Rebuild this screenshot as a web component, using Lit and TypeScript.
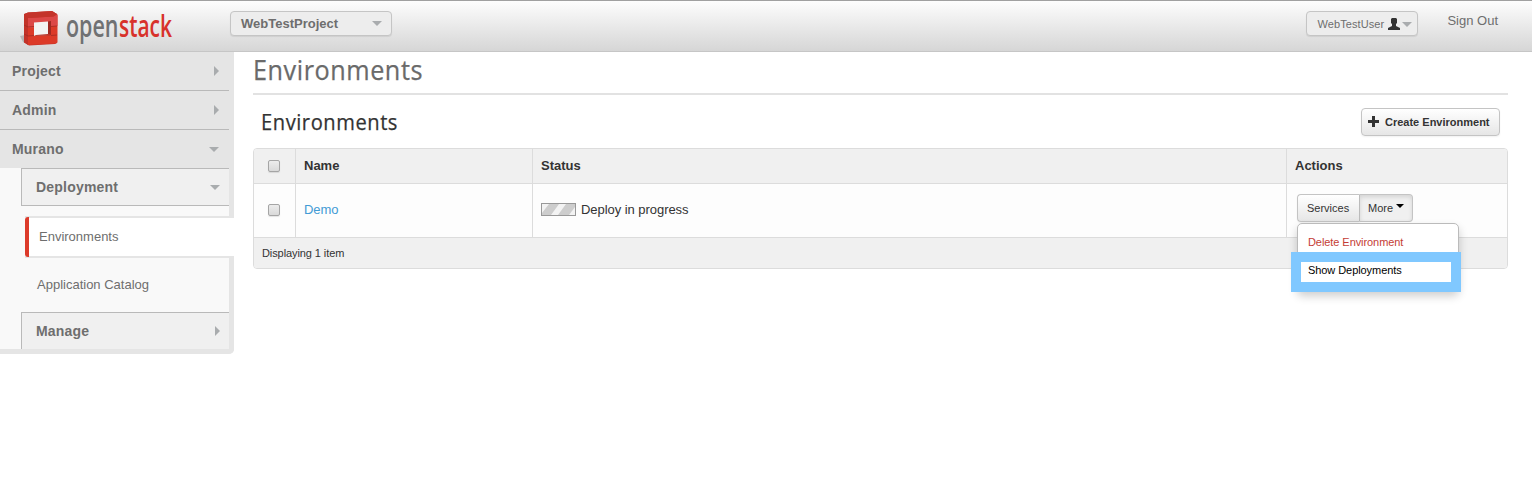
import { LitElement, html, svg, css } from "lit";
import { customElement } from "lit/decorators.js";

@customElement("os-logo")
class OsLogo extends LitElement {
  static styles = css`
    :host { display: block; width: 160px; height: 44px; }
    svg { display: block; overflow: visible; }
    .word { font-family: "Open Sans", sans-serif; font-size: 30px; font-weight: 600; }
    .open { fill: #707173; }
    .stack { fill: #d8322b; }
  `;
  render() {
    return html`<svg width="160" height="44" viewBox="20 5 160 44">
      <path d="M20 36l5-1v8l-2-1z" fill="#8b8b8b" opacity=".5" />
      <path d="M24 14l4-1.500 24-1.500 5 3v29l-2 1-26 1.500-5-3z" fill="#c5332a" />
      <path d="M28 18.500l26-1.500 3.500-2v27.500l-2.500 1-27 1.500z" fill="#dc3a28" />
      <path d="M28 18l25.500-1.500 4-2.500v12l-6 .5-23.500 1.500z" fill="#dc4847" />
      <path d="M24.500 14l3.500-1.500 24-1.500 5 3-3.500 2.500-25 1.500z" fill="#c4342b" />
      <path d="M24 14l4 4v27l-4-3z" fill="#c23329" />
      <path d="M34 22.500l14-1v13.500l-14 1z" fill="#f3f3f3" />
      <path d="M48 21.500l3-.5v14l-3-1z" fill="#9f2a23" />
      <path d="M34 36l2-1 12-1 3 1.500z" fill="#b5352b" />
      <path d="M24 25l4 2 6-.5M24 34l4 2 6-.5M51 26.500l6-.5M51 35.500l6-.5" fill="none" stroke="#a82c23" stroke-width=".9" />
      <text class="word open" x="66" y="36.500" textLength="52.500" lengthAdjust="spacingAndGlyphs">open</text>
      <text class="word stack" x="119" y="36.500" textLength="53" lengthAdjust="spacingAndGlyphs">stack</text>
    </svg>`;
  }
}

@customElement("app-root")
class AppRoot extends LitElement {
  static styles = css`
    :host { display: block; height: 484px; overflow: hidden; background: #fff; color: #333; font: 13px/18px "Liberation Sans", Arial, sans-serif; }
    * { box-sizing: border-box; }
    header { height: 52px; display: flex; align-items: flex-start; border-top: 1px solid #a0a0a0; border-bottom: 1px solid #c6c6c6; background: linear-gradient(#fdfdfd, #d6d6d6); color: #6e6e6e; padding-right: 34px; }
    os-logo { margin: 4px 50px 0 20px; }
    .pick { margin-top: 10px; height: 25px; border: 1px solid #c5c5c5; border-radius: 4px; background: #ededed; display: flex; align-items: center; justify-content: space-between; box-shadow: 0 1px 1px rgba(0,0,0,.08); }
    .project { width: 162px; padding: 0 9px 0 10px; font-weight: bold; }
    .user { width: 112px; margin-left: auto; padding: 1px 5px 0 10px; font-size: 11px; letter-spacing: .1px; }
    .user svg { margin-left: auto; margin-right: 2px; }
    .signout { margin: 11px 0 0 29px; }
    .down { border: 5px solid transparent; border-top-color: #a9acae; border-bottom: 0; }
    .right { border: 5px solid transparent; border-left-color: #a9acae; border-right: 0; }
    .body { display: flex; align-items: flex-start; }
    nav { width: 234px; height: 302px; background: #f9f9f9; border-right: 5px solid #e5e5e5; border-bottom: 5px solid #e5e5e5; border-radius: 0 0 5px 0; color: #6e6e6e; }
    .top, .sub { display: flex; align-items: center; justify-content: space-between; font-weight: bold; font-size: 14px; letter-spacing: .2px; }
    .top { height: 39px; padding: 0 10px 0 12px; background: #e5e5e5; border-bottom: 1px solid #b9b9b9; }
    .top.last { height: 38px; border: 0; }
    .sub { margin-left: 21px; height: 38px; padding: 0 9px 0 14px; background: #f0f0f0; border: 1px solid #b9b9b9; border-right: 0; }
    .active { margin: 10px -5px 0 25px; height: 42px; background: #fff; border-top: 2px solid #e5e5e5; border-bottom: 2px solid #e5e5e5; display: flex; }
    .bar { width: 4px; height: 40px; margin-top: -1px; background: #dc3b2b; border-radius: 3px 0 0 3px; }
    .active span { padding: 10px 0 0 10px; }
    .plain { height: 54px; padding: 18px 0 0 37px; }
    .manage { border-bottom: 0; height: 37px; }
    main { width: 1255px; margin-left: 19px; }
    .title { height: 43px; border-bottom: 2px solid #e2e2e2; }
    .title svg, .caption svg { display: block; overflow: visible; }
    .h { font-family: "Open Sans", sans-serif; }
    .caption { height: 53px; display: flex; justify-content: space-between; padding: 13px 8px 0 8px; }
    h1, h2 { margin: 0; font-weight: normal; }
    .btn { height: 28px; border: 1px solid #c4c4c4; border-radius: 4px; background: linear-gradient(#fff, #e6e6e6); box-shadow: 0 1px 2px rgba(0,0,0,.06); font-size: 11px; display: flex; align-items: center; }
    .create { width: 139px; padding-left: 6px; gap: 6px; font-weight: bold; white-space: nowrap; }
    .create svg { margin-top: -2px; }
    .table { border: 1px solid #dcdcdc; border-radius: 4px; height: 121px; background: #fdfdfd; }
    .row { display: grid; grid-template-columns: 41px 237px 754px 1fr; }
    .row > div { border-left: 1px solid #dcdcdc; padding-left: 8px; display: flex; align-items: center; }
    .row > div:first-child { border-left: 0; padding-left: 14px; }
    .head { height: 34px; background: #f0f0f0; font-weight: bold; border-radius: 3px 3px 0 0; }
    .data { height: 55px; border-top: 1px solid #dcdcdc; border-bottom: 1px solid #dcdcdc; letter-spacing: -.05px; }
    .row.data > div:not(.actions) { padding-bottom: 2px; }
    .foot { height: 30px; background: #f0f0f0; padding: 6px 0 0 8px; font-size: 11px; letter-spacing: -.09px; border-radius: 0 0 3px 3px; }
    .check { width: 12px; height: 12px; border: 1px solid #a5a5a5; border-radius: 2px; background: linear-gradient(#ececec, #d9d9d9); box-shadow: 0 1px 1px rgba(0,0,0,.1); }
    .link { color: #429bd5; }
    .progress { margin-right: 5px; display: block; }
    .row > .actions { position: relative; align-items: flex-start; padding: 10px 0 0 10px; letter-spacing: 0; }
    .services { width: 63px; padding-left: 9px; border-radius: 4px 0 0 4px; border-right-color: #bbb; }
    .more { width: 53px; padding-left: 8px; border-left: 0; border-radius: 0 4px 4px 0; background: #f0f0f0; box-shadow: inset 0 2px 4px rgba(0,0,0,.12); }
    .caret { border: 4px solid transparent; border-top-color: #000; border-bottom: 0; margin: -4px 0 0 3px; }
    .menu { position: absolute; z-index: 2; left: 10px; top: 39px; width: 162px; height: 68px; background: #fff; border: 1px solid #bbb; border-radius: 5px; box-shadow: 0 5px 10px rgba(0,0,0,.2); font-size: 11px; letter-spacing: -.07px; padding: 9px 0 0 10px; color: #c43c35; }
    .highlight { position: absolute; z-index: 3; left: 4px; top: 68px; width: 170px; height: 40px; border: 10px solid #80c8ff; background: #fff; color: #000; font-size: 11px; letter-spacing: -.07px; line-height: 16px; padding-left: 7px; }
  `;

  heading(size: number, width: number, height: number, baseline: number, fill: string) {
    return html`<svg width=${width + 2} height=${height}>${svg`<text class="h" x="0" y=${baseline} font-size=${size} fill=${fill} stroke=${fill} stroke-width=".25" letter-spacing=".6" textLength=${width} lengthAdjust="spacingAndGlyphs">Environments</text>`}</svg>`;
  }

  render() {
    return html`
      <header>
        <os-logo></os-logo>
        <div class="pick project">WebTestProject<i class="down"></i></div>
        <div class="pick user">WebTestUser
          <svg width="12" height="12" viewBox="0 0 12 12"><path d="M4 0h4l1 1v4L8 6v2l4 2v2H0v-2l4-2V6L3 5V1z" fill="#333" /></svg>
          <i class="down"></i></div>
        <div class="signout">Sign Out</div>
      </header>
      <div class="body">
        <nav>
          <div class="top">Project<i class="right"></i></div>
          <div class="top">Admin<i class="right"></i></div>
          <div class="top last">Murano<i class="down"></i></div>
          <div class="sub">Deployment<i class="down"></i></div>
          <div class="active"><div class="bar"></div><span>Environments</span></div>
          <div class="plain">Application Catalog</div>
          <div class="sub manage">Manage<i class="right"></i></div>
        </nav>
        <main>
          <h1 class="title">${this.heading(27.5, 170, 40, 28, "#6a6a6a")}</h1>
          <div class="caption">
            <h2>${this.heading(22, 137, 38, 22, "#333")}</h2>
            <div class="btn create"><svg width="11" height="11"><path d="M4 0h3v4h4v3H7v4H4V7H0V4h4z" fill="#333" /></svg>Create Environment</div>
          </div>
          <div class="table">
            <div class="row head"><div><i class="check"></i></div><div>Name</div><div>Status</div><div>Actions</div></div>
            <div class="row data">
              <div><i class="check"></i></div>
              <div class="link">Demo</div>
              <div><svg class="progress" width="35" height="13"><rect width="35" height="13" fill="#cdcdcd" /><path d="M1 1h7L1 10zM10 12L18 1h7l-8 11zM28 12l6-8v8z" fill="#f3f3f3" /><rect x=".5" y=".5" width="34" height="12" fill="none" stroke="#999" /></svg>Deploy in progress</div>
              <div class="actions">
                <div class="btn services">Services</div>
                <div class="btn more">More<i class="caret"></i></div>
                <div class="menu">Delete Environment</div>
                <div class="highlight">Show Deployments</div>
              </div>
            </div>
            <div class="foot">Displaying 1 item</div>
          </div>
        </main>
      </div>`;
  }
}
